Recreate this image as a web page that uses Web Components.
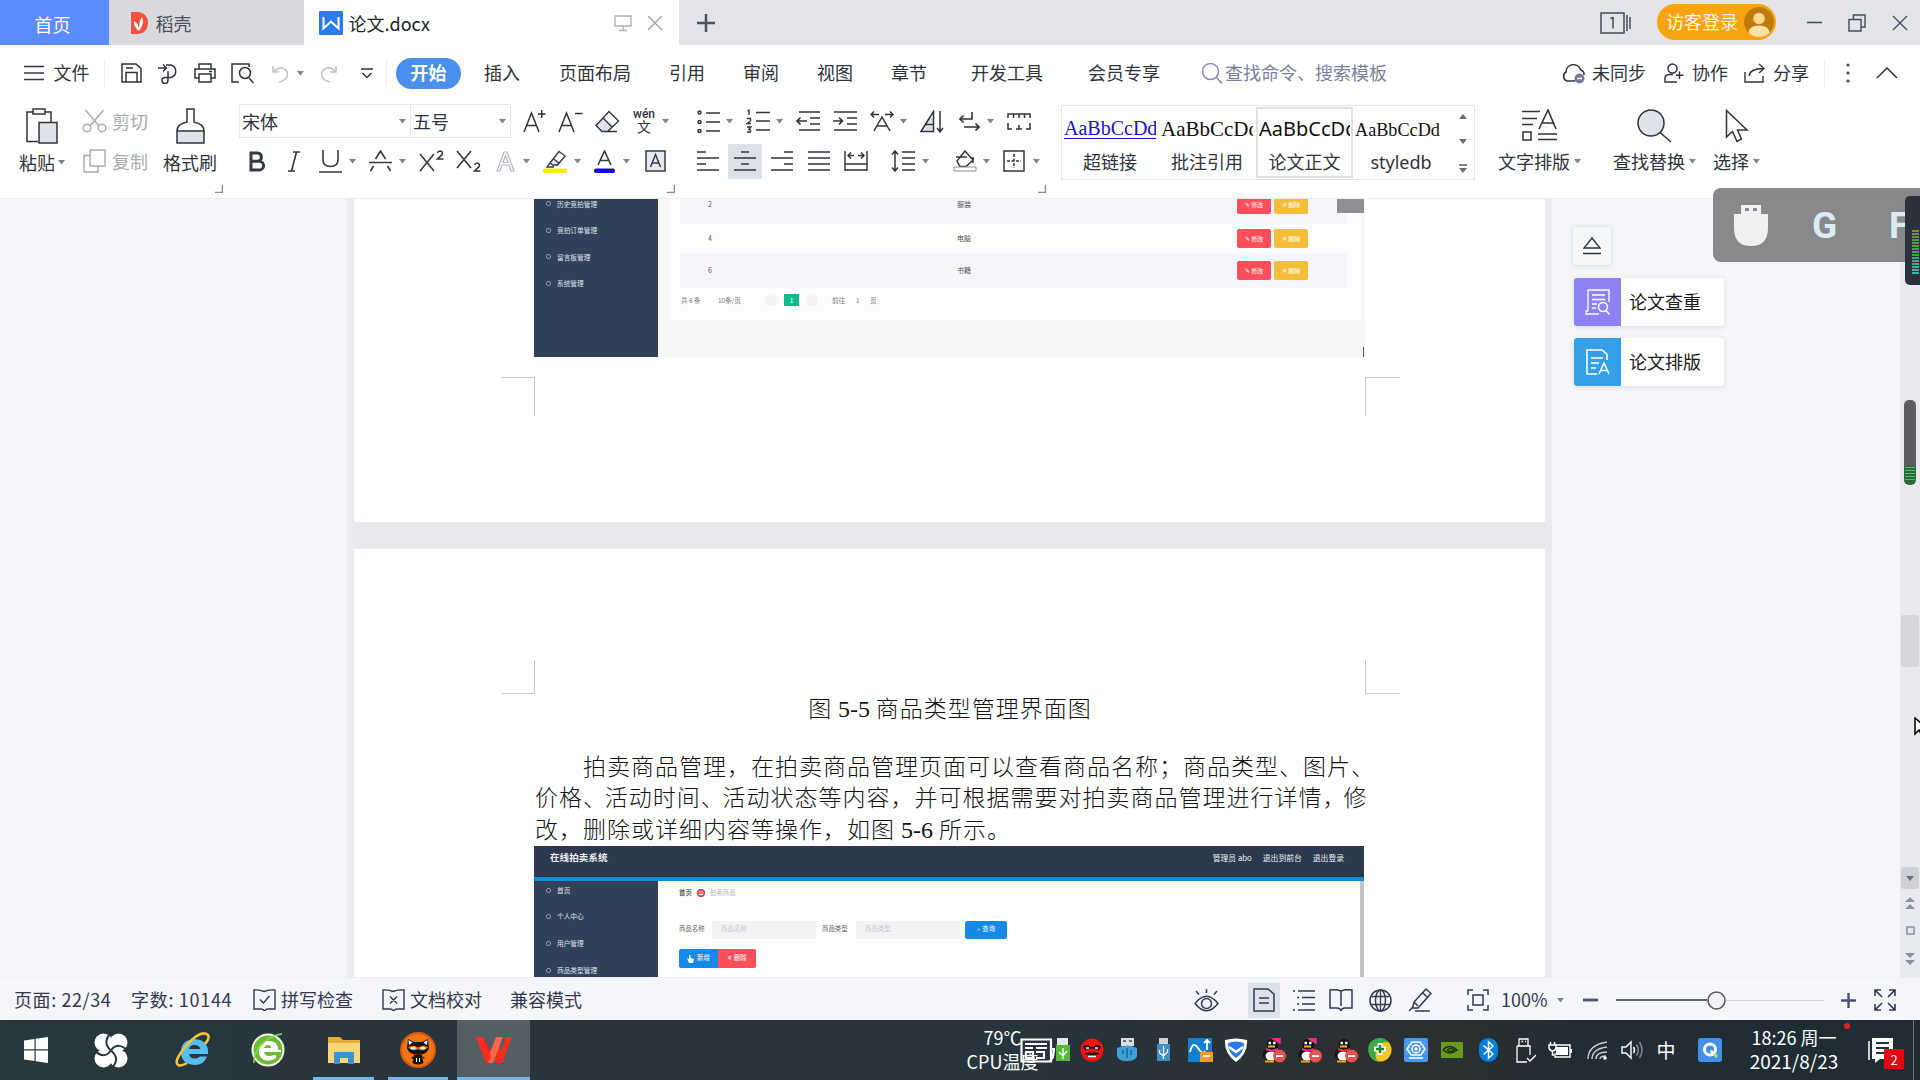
<!DOCTYPE html>
<html lang="zh-CN">
<head>
<meta charset="utf-8">
<title>论文.docx</title>
<style>
html,body{margin:0;height:100%;overflow:hidden;background:#f4f6f9}
body{font:18px/1 "Noto Sans CJK SC",sans-serif;color:#30343c}
</style>
</head>
<body>
<office-desktop></office-desktop>
<script>
/* ---------- icon set: [width, height, markup] ---------- */
const I = {
  daoke:[18,22,'<path d="M1 0H8Q18 1 18 11T8 22H1Z" fill="#f4523f" stroke="none"/><path d="M9 19Q3 14 4 9Q8 11 9 17Q9 9 12 5Q15 11 9 19" fill="#fff" stroke="none"/>'],
  writer:[24,24,'<rect width="24" height="24" rx="1" fill="#2b7af0" stroke="none"/><path d="M4.500 6V17.500L12 10.500L19.500 17.500V6" stroke="#fff" stroke-width="2"/>'],
  monitor:[18,18,'<path d="M1 2H17V12H1ZM9 12V16M5 16.500H13" stroke="#aab0ba" stroke-width="1.300"/>'],
  close:[16,16,'<path d="M1 1L15 15M15 1L1 15" stroke-width="1.300"/>'],
  plus:[18,18,'<path d="M9 0V18M0 9H18" stroke="#4b5062" stroke-width="2.500"/>'],
  winlist:[31,22,'<path d="M1 1H24V21H1ZM27 3V19M30 5V17M10.500 6.500L13 5.500V16.500" stroke-width="1.500"/>'],
  avatar:[30,30,'<circle cx="15" cy="15" r="15" fill="#bd7c0d" stroke="none"/><circle cx="15" cy="11.500" r="5.800" fill="#ffd68a" stroke="none"/><path d="M4.500 26Q5 18.500 15 18.500T25.500 26Q21 30 15 30T4.500 26" fill="#ffe0a6" stroke="none"/>'],
  min:[15,15,'<path d="M0 7.500H15" stroke-width="1.600"/>'],
  restore:[18,18,'<path d="M1 5.500H13V17H1ZM5.500 5V1H17V13H13.500" stroke-width="1.400"/>'],
  menu:[20,16,'<path d="M0 1.500H20M0 8H20M0 14.500H20" stroke-width="1.500"/>'],
  save:[21,20,'<path d="M1 1H15L20 5.500V19H1ZM5 19V9.500H16V19M5 5H12" stroke-width="1.500"/>'],
  export:[22,21,'<path d="M1 5H9M6 1.500L9.500 5L6 8.500M9 2H14A6.500 6.500 0 0 1 14 14.500H8M8 14.500A3 3 0 1 0 11 17.500V8" stroke-width="1.500"/>'],
  print:[22,20,'<path d="M5 6V1H17V6M5 15H1V6H21V15H17M5 11H17V19H5ZM15 8.500H18" stroke-width="1.500"/>'],
  preview:[23,21,'<path d="M8 19H1V1H18V4M18 15L22.500 20" stroke-width="1.500"/><circle cx="14" cy="10" r="5.500"/>'],
  undo:[17,19,'<path d="M1 2V8H7M1.500 8Q5 3 10 4Q16 6 15.500 11T7 18" stroke="#c3c5ca" stroke-width="1.600"/>'],
  redo:[17,19,'<path d="M16 2V8H10M15.500 8Q12 3 7 4Q1 6 1.500 11T10 18" stroke="#c3c5ca" stroke-width="1.600"/>'],
  more:[12,11,'<path d="M0 1H12M1.500 5L6 9.500L10.500 5" stroke-width="1.500"/>'],
  search:[22,22,'<circle cx="9.500" cy="9.500" r="8" stroke="#8a8fa3"/><path d="M15.500 15.500L21 21.500" stroke="#8a8fa3" stroke-width="1.600"/>'],
  cloud:[25,21,'<path d="M14 18H6A5 5 0 0 1 5 9A7.500 7.500 0 0 1 19.500 6.500Q23.500 8.500 23 12" stroke-width="1.500"/><circle cx="18.500" cy="15.500" r="5" fill="#737b92" stroke="none"/><path d="M16 15.500H21" stroke="#fff"/>'],
  person:[20,21,'<circle cx="8.500" cy="5.500" r="4.500"/><path d="M13 19H1V14Q2 11.500 5 11.500H9M15.500 8.500V16M11.800 12.200H19.500" stroke-width="1.400"/>'],
  share:[22,20,'<path d="M1 9V19H19V13M5 13Q6 5.500 19 5.500M15 1L20 5.500L15 10" stroke-width="1.400"/>'],
  dots:[4,20,'<g fill="#4b5062" stroke="none"><circle cx="2" cy="2" r="1.600"/><circle cx="2" cy="10" r="1.600"/><circle cx="2" cy="18" r="1.600"/></g>'],
  chevup:[22,12,'<path d="M1 11L11 1L21 11" stroke-width="1.500"/>'],
  caret:[7,5,'<path d="M0 0H7L3.500 4.500Z" fill="#7d828c" stroke="none"/>'],
  caretup:[8,5,'<path d="M0 5H8L4 0Z" fill="#6b7079" stroke="none"/>'],
  caretdn:[8,5,'<path d="M0 0H8L4 5Z" fill="#6b7079" stroke="none"/>'],
  caretmore:[8,9,'<path d="M0 1H8" stroke-width="1.200"/><path d="M0 4H8L4 9Z" fill="#6b7079" stroke="none"/>'],
  corner:[8,8,'<path d="M7.500 0V7.500H0" stroke="#858991"/>'],
  paste:[32,36,'<path d="M12 33.500H1V4H7M19 4H25V14" stroke-width="1.500"/><rect x="7" y="1" width="12" height="5" /><rect x="13" y="14.500" width="18" height="20.500" fill="#dfe2e8"/>'],
  cut:[25,24,'<g stroke="#a8abb2" stroke-width="1.400"><path d="M3.500 1L17 17M21.500 1L8 17"/><circle cx="5" cy="19" r="3.800"/><circle cx="20" cy="19" r="3.800"/></g>'],
  copy:[23,24,'<path d="M7 1H22V17H7ZM7 6.500H1V23H15V17" stroke="#a8abb2" stroke-width="1.400"/>'],
  brush:[29,36,'<path d="M1 23H28V35H1Z" fill="#dfe2e8" stroke="none"/><path d="M11 1H18V14Q28 16 28 23V35H1V23Q1 16 11 14ZM1 23H28" stroke-width="1.500"/>'],
  fontup:[23,23,'<path d="M1 22L8.500 3L16 22M4 15.500H13M15 4H22.500M18.700 0V8" stroke-width="1.500"/>'],
  fontdn:[25,23,'<path d="M1 22L8.500 3L16 22M4 15.500H13M17 3.500H24.500" stroke-width="1.500"/>'],
  eraser:[25,23,'<path d="M8 8L18 15L12.500 21H7L1 15Z" fill="#dfe2e8" stroke="none"/><path d="M14 1.500L23.500 11L12.500 21.500H7L1 15.500ZM8 8L17.500 17.500M11 21.500H22" stroke-width="1.400"/>'],
  bold:[17,21,'<path d="M2 2H9A4 4.200 0 0 1 9 10.300H2ZM2 10.300H10A4.500 4.300 0 0 1 10 19H2Z" stroke-width="3"/>'],
  italic:[12,21,'<path d="M5 1H12M0 20H7M8.500 1L3.500 20" stroke-width="1.600"/>'],
  underline:[23,23,'<path d="M4 0V10Q4 16.500 11.500 16.500T19 10V0M0 22H23" stroke-width="1.600"/>'],
  strike:[23,22,'<path d="M6.500 9L11.500 1L16.500 9M0 12.500H23M4.500 16L1.500 21M18.500 16L21.500 21" stroke-width="1.600"/>'],
  sup:[25,22,'<path d="M1 4L15 21M15 4L1 21" stroke-width="1.600"/><path d="M18.500 3Q19 1 21 1Q24 1.500 23.300 4Q22.500 5.500 18.500 9H24.500" stroke-width="1.600"/>'],
  sub:[25,22,'<path d="M1 1L15 18M15 1L1 18" stroke-width="1.600"/><path d="M18.500 15Q19 13 21 13Q24 13.500 23.300 16Q22.500 17.500 18.500 21H24.500" stroke-width="1.600"/>'],
  effect:[19,21,'<path d="M1 20L8 1H11L18 20H15L13 14H6L4 20ZM7 11.500H12L9.500 4.500Z" stroke="#b1b4bb" stroke-width="1.200"/>'],
  highlight:[24,23,'<path d="M10 9L17 14L14 16.500H8Z" fill="#dfe2e8" stroke="none"/><path d="M16 1.500L22 6L14.500 15H9.500L7 13ZM10 8.500L16 13M7 13L4 17H11" stroke-width="1.400"/><rect x="0" y="18.500" width="24" height="4.500" rx="2" fill="#f4f000" stroke="none"/>'],
  fontcolor:[21,23,'<path d="M4 15L10.500 1L17 15M6 10.500H15" stroke-width="1.600"/><rect y="18.500" width="21" height="4.500" rx="2" fill="#1406e0" stroke="none"/>'],
  charbox:[21,22,'<rect x="1" y="1" width="19" height="20" fill="#e7e9ee"/><path d="M5.500 17L10.500 4.500L15.500 17M7.500 13H13.500" stroke-width="1.500"/>'],
  bullets:[23,23,'<path d="M9 3H23M9 12H23M9 21H23" stroke-width="1.600"/><circle cx="2.500" cy="2.500" r="1.500"/><circle cx="2.500" cy="12" r="1.500"/><circle cx="2.500" cy="21" r="1.500"/>'],
  numbers:[24,24,'<path d="M10 3.500H24M10 12H24M10 21H24" stroke-width="1.600"/><path d="M1.500 2L3 1V6M1 9.500H4.500V12L1 14.500H5M1 18H5L3 20.300Q5 21 4.500 23H1" stroke-width="1.300"/>'],
  outdent:[24,20,'<path d="M3 1H24M14 7H24M14 13H24M3 19H24M11 10H1M4.500 6.500L1 10L4.500 13.500" stroke-width="1.600"/>'],
  indent:[24,20,'<path d="M1 1H24M14 7H24M14 13H24M1 19H24M0 10H9.500M6 6.500L9.500 10L6 13.500" stroke-width="1.600"/>'],
  asian:[24,21,'<path d="M4 20L12 6L20 20M7 15H17M9 3.500H1M4 0.500L1 3.500L4 6.500M15 3.500H23M20 0.500L23 3.500L20 6.500" stroke-width="1.500"/>'],
  sort:[24,23,'<path d="M8 8L14 8V21H4Z" fill="#dfe2e8" stroke="none"/><path d="M1 21.500L13.500 1.500V21.500ZM6 14.500H13.500M20 1V21.500M17 18L20 22L23 18" stroke-width="1.500"/>'],
  wrap:[21,20,'<path d="M13 1V8H1M4.500 4.500L1 8L4.500 11.500M5 16H20M16.500 12.500L20 16L16.500 19.500" stroke-width="1.600"/>'],
  ruler:[24,17,'<path d="M1 5V1H23V5M6.500 1V5M12 1V5M17.500 1V5M1 10V16H5M23 10V16H19M9 16H15M12 12V16" stroke-width="1.500"/>'],
  al:[22,20,'<path d="M0 1H9M0 7H22M0 13H9M0 19H22" stroke-width="1.600"/>'],
  ac:[22,20,'<path d="M7 1H15M0 7H22M7 13H15M0 19H22" stroke-width="1.600"/>'],
  ar:[22,20,'<path d="M13 1H22M0 7H22M13 13H22M0 19H22" stroke-width="1.600"/>'],
  aj:[22,20,'<path d="M0 1H22M0 7H22M0 13H22M0 19H22" stroke-width="1.600"/>'],
  ad:[24,21,'<path d="M1 0V20M23 0V20M1 13H23M1 19H23M4 4.500H10M7 1.500L4 4.500L7 7.500M14 4.500H20M17 1.500L20 4.500L17 7.500" stroke-width="1.400"/>'],
  spacing:[24,22,'<path d="M11 2H24M11 8H24M11 14H24M11 20H24M4 1V21M1 4.500L4 1L7 4.500M1 17.500L4 21L7 17.500" stroke-width="1.500"/>'],
  fill:[24,22,'<path d="M12 1L20 10L13 16.500H7L4 11ZM3 7H14M20 7V13" stroke-width="1.500"/><path d="M1 17H23V21H1Z" fill="#fff" stroke="#8a8e97" stroke-width="1"/>'],
  border:[22,22,'<rect x="1" y="1" width="20" height="20"/><path d="M4 11H18M11 4V18" stroke-dasharray="3 1.500" stroke-width="1.500"/>'],
  typeset:[35,33,'<path d="M0 2.500H18M0 9.500H15M0 15.500H11M16 30.500H35M16 25H35M17 20L26 1L34 20M20 14H31" stroke-width="1.600"/><rect x="1" y="23" width="8" height="8"/>'],
  find:[35,34,'<circle cx="14" cy="14" r="13" fill="#dfe2e8" stroke-width="1.500"/><path d="M23 23.500L34 33" stroke-width="1.600"/>'],
  select:[24,34,'<path d="M1.500 1.500V28L7.500 22.500L12 32.500L16.500 30L12.500 21H22Z" stroke-width="1.500"/>'],
  eject:[18,18,'<path d="M9 1L17 11H1ZM0 16.500H18" stroke-width="1.400"/>'],
  check:[25,27,'<g stroke="#fff"><path d="M3 22V1H24V13M3 22H1V25H14M7 6H20M7 10.500H20M7 15H12M7 19H11" stroke-width="1.300"/><circle cx="18" cy="18" r="4.500"/><path d="M21 21.500L24.500 25.500"/></g>'],
  layout:[25,27,'<g stroke="#fff" stroke-width="1.500"><path d="M12 25H2V1H17L22 5.500V11M6 9H18M6 14H14M6 19H11M14 25L19 14L24 25M16 21.500H22.500"/></g>'],
  usbmouse:[34,42,'<path d="M7 1H27V10H34V24Q34 42 17 42T0 24V10H7Z" fill="#eef0f2" stroke="none"/><path d="M11 4H15V7H11ZM19 4H23V7H19Z" fill="#8b8d90" stroke="none"/>'],
  spell:[23,22,'<path d="M11 2.500Q7 0.500 1 1V20H8Q10 20 11.500 22Q13 20 15 20H22V1Q15 0.500 11 2.500M7 10.500L10.500 14L16.500 7" stroke-width="1.400"/>'],
  proof:[23,22,'<path d="M11 2.500Q7 0.500 1 1V20H8Q10 20 11.500 22Q13 20 15 20H22V1Q15 0.500 11 2.500M8 7.500L15 14.500M15 7.500L8 14.500" stroke-width="1.400"/>'],
  eye:[25,23,'<path d="M1 14.500Q12.500 0 24 14.500Q12.500 29 1 14.500M12.500 0V4M2 2L5 5.500M23 2L20 5.500" stroke-width="1.500"/><circle cx="12.500" cy="14.500" r="5"/>'],
  pageview:[22,24,'<path d="M1 1H15L21 6V23H1ZM6 10H16M6 15H16" stroke-width="1.500"/>'],
  outline:[22,21,'<path d="M5 1H22M9 7.500H22M9 14H22M5 20H22M0 1H2M4 7.500H6M4 14H6M0 20H2" stroke-width="1.500"/>'],
  book:[24,22,'<path d="M12 2Q8 0 1 1V19H8Q11 19 12 21.500Q13 19 16 19H23V1Q16 0 12 2V17" stroke-width="1.500"/>'],
  globe:[23,23,'<circle cx="11.500" cy="11.500" r="10.500"/><ellipse cx="11.500" cy="11.500" rx="5" ry="10.500"/><path d="M2.500 7.500H20.500M2.500 15.500H20.500M11.500 1V22" stroke-width="1.300"/>'],
  pen:[24,24,'<path d="M18 1L23 5.500L10 20H4.500L6 14ZM6 14L10 18M15 5L19 9M1 23L4.500 19.500M7 23H22" stroke-width="1.500"/>'],
  fit:[22,22,'<path d="M1 6V1H6M16 1H21V6M21 16V21H16M6 21H1V16M6 6H16V16H6Z" stroke-width="1.500"/>'],
  zoomout:[15,4,'<path d="M0 2H15" stroke="#4d5265" stroke-width="2.800"/>'],
  zoomin:[15,15,'<path d="M0 7.500H15M7.500 0V15" stroke="#4a4f74" stroke-width="2.400"/>'],
  full:[22,22,'<path d="M1 7V1H7M1 1L8 8M15 1H21V7M21 1L14 8M1 15V21H7M1 21L8 14M21 15V21H15M21 21L14 14" stroke-width="1.600"/>'],
  handle:[19,19,'<circle cx="9.500" cy="9.500" r="8.500" fill="#f1f2f5" stroke="#555" stroke-width="1.500"/>'],
  win:[24,26,'<path d="M0 3.500L10.500 2V12.300H0ZM11.700 1.800L24 0V12.300H11.700ZM0 13.600H10.500V24L0 22.500ZM11.700 13.600H24V26L11.700 24.200Z" fill="#fff" stroke="none"/>'],
  pinwheel:[34,35,'<g fill="#fff" stroke="none"><circle cx="9.500" cy="9.500" r="9"/><circle cx="24.500" cy="9.500" r="9"/><circle cx="24.500" cy="25.500" r="9"/><circle cx="9.500" cy="25.500" r="9"/><rect x="9" y="9" width="16" height="17"/></g><path d="M16.500 0Q8 10 17 17.500Q27 26 17.500 35M0 17Q10 27 17 17.500Q24 8 34 18" stroke="#2b373f" stroke-width="2"/>'],
  ie:[36,36,'<path d="M33 22H14Q15 26.500 19.500 26.500Q23 26.500 25 24.500H32Q29 33 19.500 33Q6 32 6 20T19.500 7Q34 8 33 22M14 17H25.500Q24 13 19.500 13T14 17" fill="#55c0ee" stroke="none"/><path d="M3 33Q-2 29 12 13T33 3Q35 6 30 12M3 33Q6 34.500 12 31" stroke="#f4c53c" stroke-width="2.600"/>'],
  greene:[34,36,'<circle cx="17" cy="18" r="15.500" fill="#6dbb35" stroke="#eef8e8" stroke-width="2"/><path d="M30 20H13Q14 24 18 24L25 23V26Q19 30 13 28Q7 25 8 18Q9 9 18 9T27 17.500L30 18ZM13 16H20Q20 13 17 13T13 16" fill="#fff" stroke="none"/><path d="M3 31Q2 22 11 12Q20 3 31 2" stroke="#8bd84f" stroke-width="1.500"/>'],
  folder:[34,30,'<path d="M1 2H13L16 5H33V28H1Z" fill="#e5ad3c" stroke="none"/><path d="M1 8H33V28H1Z" fill="#fcd575" stroke="none"/><path d="M7 29V17H27V29H21V23H13V29Z" fill="#3b93d4" stroke="none"/>'],
  ninja:[36,36,'<circle cx="18" cy="18" r="17" fill="#f47416" stroke="#d8590d" stroke-width="2"/><path d="M8 7L14 10H22L28 7L29 16Q27 23 18 23Q9 23 7 16ZM14 23H22L23.500 31Q18 34 12.500 31ZM11 26L14 24V27ZM25 26L22 24V27Z" fill="#161616" stroke="none"/><path d="M8.500 8L12.500 10.500L9 13ZM27.500 8L23.500 10.500L27 13Z" fill="#fff" stroke="none"/><path d="M8 15.500Q13 12 18 15.500Q23 12 28 15.500Q23 20 18 17Q13 20 8 15.500" fill="#f47416" stroke="none"/><ellipse cx="13" cy="16" rx="2.700" ry="1.300" fill="#fff" stroke="none"/><ellipse cx="23" cy="16" rx="2.700" ry="1.300" fill="#fff" stroke="none"/><path d="M16.500 26V30M19.500 26V30" stroke="#fff" stroke-width="1"/>'],
  wps:[36,28,'<path d="M0 1H7V6H11L15 17V27H10Z" fill="#ff2c1c" stroke="none"/><path d="M5 6H11L15 17L13 21Z" fill="#c8281f" stroke="none"/><path d="M20 27L17 17L22 8L25 16L30 1H36L26 27Z" fill="#ff2c1c" stroke="none"/><path d="M10 27L20 1H27L17 27Z" fill="#f4694b" stroke="none"/><path d="M0 1H7L15 20L12 27H10Z" fill="#ff2c1c" stroke="none"/>'],
  board:[35,25,'<path d="M1.500 1.500H31V23.500H1.500ZM31 11H34L33 19L30 23M5 6H27M5 10H13M16 10H27M6 14H13V20H6ZM16 14H24V20H16" stroke="#fff" stroke-width="2.200"/>'],
  gusb:[14,24,'<path d="M1 0H12V7H1Z" fill="#e3e8e3" stroke="none"/><path d="M0 7H14V23H0Z" fill="#56b83a" stroke="none"/><path d="M7 10V21M3 14L7 18L11 13" stroke="#eaf8e4"/>'],
  devil:[24,24,'<circle cx="12" cy="12" r="11.500" fill="#ed1515" stroke="none"/><path d="M3 8Q7 6 11 9H13Q17 6 21 8L19 12Q12 9 5 12Z" fill="#170b0b" stroke="none"/><path d="M6 10H9M15 10H18" stroke="#fff"/><path d="M4 16Q8 13 12 15Q16 13 20 16Q12 18 4 16" fill="#170b0b" stroke="none"/><path d="M8 18.500H16" stroke="#fff"/>'],
  busb:[20,24,'<path d="M4 0H17V8H4Z" fill="#d9dde0" stroke="none"/><path d="M6 3H9M12 3H15" stroke="#68727a" stroke-width="2"/><path d="M0 10Q10 5 20 10V18Q19 23 10 23T0 18Z" fill="#3f9fd9" stroke="none"/><path d="M10 10V20M6 12V16M14 12V17" stroke="#1d659b"/>'],
  tusb:[15,24,'<path d="M3 0H12V6H3Z" fill="#ccd3d8" stroke="none"/><path d="M1 6H14V23H1Z" fill="#3e8fc7" stroke="none"/><path d="M7.500 8V21M3.500 12V15L7.500 18L11.500 14V11" stroke="#fff" stroke-width="1.300"/>'],
  net:[25,24,'<rect width="24" height="24" fill="#127fcc" stroke="none"/><path d="M2 14Q5 2 10 10T17 13M19 12V2M16 5L19 2L22 5" stroke="#fff" stroke-width="1.800"/><path d="M12 14H25V24H12Z" fill="#f39a2a" stroke="none"/><path d="M15 18H22" stroke="#fff"/>'],
  shield:[24,24,'<path d="M1 2Q12-1 23 2Q24 16 12 24Q0 16 1 2" fill="#fff" stroke="none"/><path d="M4 5Q12 2 20 5Q20 15 12 20Q4 15 4 5" fill="#2b78e8" stroke="none"/><path d="M5 9L12 14L19 9" stroke="#fff" stroke-width="2.500"/>'],
  qq:[24,25,'<path d="M3 20Q-1 20 2 13Q3 11 5 10Q4 1 10 1T16 10Q21 15 17 22H4Z" fill="#101010" stroke="none"/><ellipse cx="9" cy="18" rx="5.500" ry="4.500" fill="#fff" stroke="none"/><path d="M4 11Q10 14 16 11" stroke="#e93434" stroke-width="2"/><path d="M6 8.500H13" stroke="#f4b61d" stroke-width="2"/><path d="M6.500 5H9M11 5H13.500" stroke="#fff" stroke-width="2.500"/><path d="M3 23.500H12" stroke="#f0a21d" stroke-width="2"/><circle cx="17.500" cy="18" r="6.500" fill="#e9534d" stroke="none"/><path d="M14 18H21" stroke="#fff" stroke-width="2"/>'],
  qqp:[24,25,'<path d="M3 20Q-1 20 2 13Q3 11 5 10Q4 1 10 1T16 10Q21 15 17 22H4Z" fill="#101010" stroke="none"/><ellipse cx="9" cy="18" rx="5.500" ry="4.500" fill="#fff" stroke="none"/><path d="M4 11Q10 14 16 11" stroke="#ef2b94" stroke-width="2"/><path d="M6 8.500H13" stroke="#f4b61d" stroke-width="2"/><path d="M6.500 5H9M11 5H13.500" stroke="#fff" stroke-width="2.500"/><path d="M11 1L18 5V0Z" fill="#ef2b94" stroke="#ef2b94"/><path d="M3 23.500H12" stroke="#f0a21d" stroke-width="2"/><circle cx="17.500" cy="18" r="6.500" fill="#e9534d" stroke="none"/><path d="M14 18H21" stroke="#fff" stroke-width="2"/>'],
  safe:[24,24,'<circle cx="12" cy="12" r="11.500" fill="#f0c81f" stroke="none"/><path d="M0 12A11.500 11.500 0 0 1 20 4Q10 4 8 13T12 23Q1 22 0 12" fill="#36aa49" stroke="none"/><path d="M12 5V17M6 11H18" stroke="#fff" stroke-width="5"/><path d="M12 7V15M8 11H16" stroke="#238335" stroke-width="2.500"/>'],
  cam:[24,24,'<rect width="24" height="24" rx="2" fill="#4897f2" stroke="none"/><g stroke="#fff" stroke-width="1.500"><path d="M8 4H16L21 11L17 17H7L3 11Z"/><circle cx="12" cy="11" r="4"/><circle cx="12" cy="11" r="1"/><path d="M5 20H19"/></g>'],
  nvidia:[22,16,'<rect width="22" height="16" fill="#679b19" stroke="none"/><path d="M2 8Q8 1 16 8Q9 14 2 8M6 8Q10 5 13 8Q9 11 6 8" stroke="#1e3108" stroke-width="1.500"/>'],
  bt:[19,24,'<rect width="19" height="24" rx="9.500" fill="#087fdd" stroke="none"/><path d="M4.500 7.500L14 16L9.500 20V4L14 8L4.500 16.500" stroke="#fff" stroke-width="1.500"/>'],
  usb:[20,25,'<path d="M3 1H12V8H3ZM1 8H14V17M1 8V24H11M11 20L14 23L20 17" stroke="#fff" stroke-width="1.300"/><path d="M5.500 3.500H7M9 3.500H10" stroke="#fff"/>'],
  battery:[24,18,'<path d="M6 4H22V16H7V12" stroke="#fff" stroke-width="1.400"/><path d="M8 6H20V14H8ZM22 8H24V12H22Z" fill="#fff" stroke="none"/><path d="M1 4H8V7Q7 10 4.500 10T1 7ZM2.500 1V4M6.500 1V4M4.500 10V14H6" stroke="#fff" fill="#202d35"/>'],
  wifi:[21,19,'<g stroke="#cad0d3" stroke-width="1.400"><path d="M1 18Q1 4 20 1"/><path d="M5 18Q5 8 20 6"/><path d="M9 18Q9 11 20 11"/><path d="M13 18Q13 15 19 15"/></g><circle cx="18" cy="17" r="1.800" fill="#fff" stroke="none"/>'],
  speaker:[22,20,'<path d="M1 7H5L10 2V18L5 13H1Z" stroke="#fff" stroke-width="1.400"/><path d="M12.500 7Q14.500 10 12.500 13" stroke="#fff"/><path d="M15.500 4.500Q19 10 15.500 15.500M18.500 2Q23.500 10 18.500 18" stroke="#808b91"/>'],
  qbox:[24,24,'<rect width="24" height="24" rx="3" fill="#4190ee" stroke="none"/><circle cx="12" cy="11.500" r="5.500" stroke="#fff" stroke-width="3"/><path d="M12.500 12.500L16 16" stroke="#fff" stroke-width="2.500"/><path d="M16 16L19 19" stroke="#b6ec52" stroke-width="2.800"/>'],
  note:[26,26,'<path d="M4 1H25V22H12L7 26V22H4Z" fill="#fff" stroke="none"/><path d="M1 4V23" stroke="#fff" stroke-width="1.500"/><path d="M8 6H21M8 11H21M8 16H16" stroke="#24313a" stroke-width="2"/>'],
  up2:[10,12,'<path d="M0 5H10L5 0ZM0 12H10L5 7Z" fill="#8d909a" stroke="none"/>'],
  dn2:[10,12,'<path d="M0 0H10L5 5ZM0 7H10L5 12Z" fill="#8d909a" stroke="none"/>'],
  sq:[9,9,'<rect x="1" y="1" width="7" height="7" stroke="#8d909a"/>'],
  face:[8,8,'<circle cx="4" cy="4" r="3.500" fill="#e96a78" stroke="#d94155"/><path d="M2 3H3M5 3H6M2 5.500H6" stroke="#fff" stroke-width=".8"/>'],
  hand:[7,8,'<path d="M2 0V4L0 3L2 8H6L7 4L3.500 3V0Z" fill="#fff" stroke="none"/>'],
  pointer:[12,20,'<path d="M1 1V17L5 13L8 19L11 18L8 12H14Z" fill="#fff" stroke="#000" stroke-width="1.500"/>']
};

customElements.define('ui-icon', class extends HTMLElement {
  constructor(){ super(); this.attachShadow({mode:'open'}); }
  connectedCallback(){
    const [w,h,m] = I[this.getAttribute('name')];
    this.shadowRoot.innerHTML = `<style>:host{display:inline-flex;flex:none;width:${w}px;height:${h}px}svg{display:block}</style>
      <svg width="${w}" height="${h}" viewBox="0 0 ${w} ${h}" fill="none" stroke="currentColor" stroke-width="1.500">${m}</svg>`;
  }
});

const icon = n => `<ui-icon name="${n}"></ui-icon>`;
/* One horizontal strip: [start, width, content, class]; margins carry the gaps between items. */
const strip = (x0, items) => { let x = x0; return items.map(([s,w,c,k='']) => {
  const o = `<span class="i ${k}" style="margin-left:${+(s-x).toFixed(2)}px;width:${w}px">${c}</span>`; x = s + w; return o; }).join(''); };
/* icon centred at c; text starting at s */
const ic = (c,n,k) => [c - I[n][0]/2, I[n][0], icon(n), k];
const tx = (s,w,t,k) => [s, w, t, k];

const base = `*{box-sizing:border-box}:host{display:block;flex:none;box-sizing:border-box}.row{display:flex;align-items:center}
.i{display:inline-flex;flex:none;align-items:center;white-space:nowrap}.c{justify-content:center}`;
const define = (tag, css, html) => customElements.define(tag, class extends HTMLElement {
  constructor(){ super(); this.attachShadow({mode:'open'}).innerHTML = `<style>${base}${css}</style>${html}`; }
});

define('title-bar', `:host{height:45px;background:#e2e4e7}.row{height:45px}
.tab{display:flex;flex:none;height:45px;align-items:center;padding-bottom:1px}.home{width:109px;justify-content:center;background:#5b8bff;color:#fff;padding:2px 4px 0 0}
.dk{width:195px;background:#d9dadd;color:#4a4e58;padding-top:2px}.doc{width:375px;background:#fff;color:#22262c;padding-top:2px}.pill{height:36px;border-radius:18px;background:#f7a40e;color:#fff7e4;padding-left:9px;gap:6px;margin-top:-2px}.pill span{margin-top:-2px}.dim{color:#9aa0aa}.dark{color:#454a5c}.t{padding-bottom:1px}`,
`<div class="row"><div class="tab home">首页</div>
<div class="tab dk">${strip(109,[ic(139,'daoke'),tx(155.5,40,'稻壳','t')])}</div>
<div class="tab doc">${strip(304,[ic(331,'writer'),tx(348.5,84,'论文.docx','t'),ic(623,'monitor'),ic(655,'close','dim')])}</div>
${strip(679,[ic(705.5,'plus'),ic(1615.5,'winlist','dark'),[1657,119,`<span>访客登录</span>${icon('avatar')}`,'pill'],ic(1814.5,'min','dark'),ic(1857,'restore','dark'),ic(1900,'close','dark')])}</div>`);

define('menu-bar', `:host{height:56px;background:#fff}.row{height:56px}.t{padding-bottom:1.500px}
.on{height:31px;border-radius:16px;background:#4a8fee;color:#fff;font-weight:700;justify-content:center;padding-bottom:2px}.s{color:#7c8199}.v{height:28px;background:#eceef1}`,
`<div class="row">${strip(0,[ic(34,'menu'),tx(53.5,38,'文件','t'),[104,1,'','v'],ic(131,'save'),ic(168,'export'),ic(205,'print'),ic(242.5,'preview'),ic(280.5,'undo'),ic(300,'caret'),ic(328.5,'redo'),ic(366.5,'more'),[386,1,'','v'],
[396,65,'开始','on'],tx(484,37,'插入','t'),tx(559,73,'页面布局','t'),tx(669,37,'引用','t'),tx(743,37,'审阅','t'),tx(817,37,'视图','t'),tx(891,37,'章节','t'),tx(971,73,'开发工具','t'),tx(1088,73,'会员专享','t'),
ic(1211.5,'search'),tx(1225,164,'查找命令、搜索模板','t s'),ic(1573.5,'cloud'),tx(1592,55,'未同步','t'),ic(1674,'person'),tx(1692,37,'协作','t'),ic(1755,'share'),tx(1773,37,'分享','t'),[1824,1,'','v'],ic(1847.5,'dots'),ic(1887,'chevup')])}</div>`);

define('ribbon-clipboard', `:host{width:229px}.cols{display:flex;height:80px}.col{display:flex;flex-direction:column;align-items:center;gap:7px;padding-top:7px}
.lab{display:flex;align-items:center;gap:3px;white-space:nowrap;line-height:22px}.mid{padding:0;gap:0;align-items:flex-start}.mid .row{height:40px;color:#a8abb2}.k{padding:4px 0 0 215px;line-height:0}`,
`<div class="cols"><div class="col" style="margin-left:19px;width:46px">${icon('paste')}<div class="lab">粘贴${icon('caret')}</div></div>
<div class="col mid" style="margin-left:17px;width:79px"><div class="row">${strip(82,[ic(94.5,'cut'),tx(112,37,'剪切')])}</div><div class="row">${strip(82,[ic(94,'copy'),tx(112,37,'复制')])}</div></div>
<div class="col" style="width:58px">${icon('brush')}<div class="lab">格式刷</div></div></div><div class="k">${icon('corner')}</div>`);

define('ribbon-font', `:host{width:453px}.row{height:40px}.f{height:34px;border:1px solid #e4e6ea;justify-content:space-between;padding:0 4px 0 2px}.f+.f{border-left:0}
.wen{flex-direction:column;font-size:14px;line-height:13px;gap:1px}.wen b{font:500 12px/10px Roboto,sans-serif}.k{padding:4px 0 0 438px;line-height:0}.r{color:#363a43}`,
`<div class="row">${strip(229,[[239,172,`宋体${icon('caret')}`,'f'],[411,100,`五号${icon('caret')}`,'f'],ic(534.5,'fontup'),ic(570,'fontdn'),ic(607,'eraser'),[630,28,'<b>wén</b><span>文</span>','wen'],ic(665.5,'caret')])}</div>
<div class="row r">${strip(229,[ic(257.5,'bold'),ic(294,'italic'),ic(330.5,'underline'),ic(352.500,'caret'),ic(380,'strike'),ic(402,'caret'),ic(431,'sup'),ic(468,'sub'),ic(505,'effect'),ic(526,'caret'),ic(555,'highlight'),ic(577,'caret'),ic(604.5,'fontcolor'),ic(626.5,'caret'),ic(655,'charbox')])}</div><div class="k">${icon('corner')}</div>`);

define('ribbon-paragraph', `:host{width:371px}.row{height:40px}.act{height:35px;background:#dde1e9;justify-content:center}.k{padding:4px 0 0 356px;line-height:0}`,
`<div class="row">${strip(682,[ic(708.5,'bullets'),ic(729.5,'caret'),ic(758,'numbers'),ic(779.5,'caret'),ic(808,'outdent'),ic(845,'indent'),ic(882,'asian'),ic(903.5,'caret'),ic(932,'sort'),ic(969,'wrap'),ic(990.5,'caret'),ic(1019,'ruler')])}</div>
<div class="row">${strip(682,[ic(708,'al'),[728,34,icon('ac'),'act'],ic(782,'ar'),ic(819,'aj'),ic(856,'ad'),ic(903,'spacing'),ic(925.5,'caret'),ic(965,'fill'),ic(986.5,'caret'),ic(1014,'border'),ic(1036.5,'caret')])}</div><div class="k">${icon('corner')}</div>`);

define('style-cell', `:host{display:flex;flex-direction:column;align-items:center;height:71px;padding:9px 3px 0 2px;gap:7px}.p{width:100%;overflow:hidden;white-space:nowrap;line-height:25px;height:27px;color:#111}
.l{line-height:22px;white-space:nowrap}:host([on]){border:2px solid #dfe1e5;padding:7px 1px 0}`, `<div class="p"><slot name="sample"></slot></div><div class="l"><slot></slot></div>`);

define('style-gallery', `:host{width:414px;height:75px;margin:4px 0 0 8px;border:1px solid #e3e5e9}.row{height:73px}.s{font-family:"Liberation Serif",serif}
.ar{display:flex;flex-direction:column;gap:20px;align-items:center;padding-top:2px}`,
`<div class="row"><style-cell style="width:97px"><span slot="sample" class="s" style="display:block;height:23px;font-size:20px;color:#1c0fd0;border-bottom:1px solid #1c0fd0">AaBbCcDd</span>超链接</style-cell>
<style-cell style="width:97px"><span slot="sample" class="s" style="font-size:21px">AaBbCcDd</span>批注引用</style-cell>
<style-cell on style="width:97px"><span slot="sample" style="font:20px 'Noto Sans',sans-serif;line-height:25px">AaBbCcDd</span>论文正文</style-cell>
<style-cell style="width:97px"><span slot="sample" class="s" style="font-size:18.200px">AaBbCcDd</span><span style="font:18px/20px 'Noto Sans',sans-serif">styledb</span></style-cell>
<div class="ar" style="margin-left:9px">${icon('caretup')}${icon('caretdn')}${icon('caretmore')}</div></div>`);

define('ribbon-action', `:host{display:flex;flex-direction:column;align-items:center;padding-top:8px;gap:7px;height:80px}.l{display:flex;align-items:center;gap:4px;white-space:nowrap;line-height:22px}.b{height:34px;display:flex}`,
`<div class="b"><slot name="icon"></slot></div><div class="l"><slot></slot>${icon('caret')}</div>`);

define('ribbon-bar', `:host{height:98px;background:#fff;border-bottom:1px solid #eceef1;display:flex;align-items:flex-start}`,
`<ribbon-clipboard></ribbon-clipboard><ribbon-font></ribbon-font><ribbon-paragraph></ribbon-paragraph><style-gallery></style-gallery>
<ribbon-action style="margin-left:23px;width:83px"><ui-icon slot="icon" name="typeset"></ui-icon>文字排版</ribbon-action>
<ribbon-action style="margin-left:32px;width:83px"><ui-icon slot="icon" name="find"></ui-icon>查找替换</ribbon-action>
<ribbon-action style="margin-left:17px;width:47px"><ui-icon slot="icon" name="select"></ui-icon>选择</ribbon-action>`);

/* ---------- embedded figures ---------- */
const side = (items) => items.map(t=>`<div class="m"><u></u>${t}</div>`).join('');
const fig = `:host{width:830px;margin-left:180px}.side{flex:none;width:124px;background:#314159;color:#dfe4ec;font-size:6.700px}.m{height:26.670px;display:flex;align-items:center;padding-left:12px;gap:6px}
.m u{width:5px;height:5px;border:1px solid #8d99ab;border-radius:2px}.btn{display:inline-flex;flex:none;align-items:center;justify-content:center;height:19px;border-radius:2px;color:#fff;font-size:6px;gap:3px;width:34px;background:#fb4f5b;margin-left:252px}.y{background:#f5be38;margin-left:3px}`;
const acts = `<span class="btn">✎ 修改</span><span class="btn y">✕ 删除</span>`;
define('figure-types', fig+`:host{display:flex;height:158px}.side .m:first-child{height:18px;align-items:flex-start;padding-top:2px}.main{display:flex;flex:1;background:#f7f9f9}.w{background:#fdfdfe;height:121px;width:690px;margin-left:13px;padding:0 14px 0 9px}
.tr{display:flex;align-items:center;font-size:7px;color:#555}.tr .n{width:60px;text-align:center}.tr .g{width:40px;margin-left:204px;margin-right:1px;text-align:center}.lav{background:#f5f5fc}.pg{height:24px;font-size:6.500px;color:#777}
.top{height:25px;padding-bottom:14px}.gr{height:12px;background:#0fbd8c;color:#fff}.dot{height:11px;border-radius:6px;background:#f3f3f5}.tail{display:flex;flex-direction:column;width:27px;justify-content:space-between;align-items:flex-end;margin-left:-28px}.tail b{width:27px;height:14px;background:#8e9093}.tail i{width:1px;height:10px;background:#555}`,
`<div class="side">${side(['历史竞拍管理','竞拍订单管理','留言板管理','系统管理'])}</div><div class="main"><div class="w">
<div class="tr lav top"><span class="n">2</span><span class="g">服装</span>${acts}</div>
<div class="tr" style="height:29px"><span class="n">4</span><span class="g">电脑</span>${acts}</div>
<div class="tr lav" style="height:35px"><span class="n">6</span><span class="g">书籍</span>${acts}</div>
<div class="row pg">${strip(680,[tx(681,20,'共 6 条'),tx(718,22,'10条/页'),[765,12,'','dot'],[784,15,'1','gr c'],[806,12,'','dot'],tx(832,14,'前往'),tx(856,4,'1'),tx(870,8,'页')])}</div></div></div>
<div class="tail"><b></b><i></i></div>`);

define('figure-goods', fig+`:host{height:132px;overflow:hidden}.hd{display:flex;align-items:center;height:31px;background:#2c384d;color:#eef1f5;padding:0 20px 7px 16px;font-size:7.800px;gap:11px;white-space:nowrap}.hd b{font-size:9.600px;margin-right:auto}
.ln{height:4px;background:#178cdb}.bd{display:flex;height:97px;overflow:hidden}.side .m:first-child{height:23px;padding-bottom:3.600px}.main{flex:1;padding:6px 0 0 21px;border-right:4px solid #c0c2c5;background:#fefefe;font-size:6.400px;color:#666}.l{height:13px}.f{height:28px;margin-top:16px}
.in{height:18px;background:#f3f2f4;color:#c9c9cd;padding-left:9px}.bl{background:#1489e8;color:#fff;justify-content:center;gap:3px;height:18px;border-radius:2px}.rd{background:#fb4f5b;color:#fff;justify-content:center;height:19px;border-radius:0 2px 2px 0}.h{height:19px;border-radius:2px 0 0 2px}.g{color:#b4b4b4}`,
`<div class="hd"><b>在线拍卖系统</b><span>管理员 abo</span><span>退出到前台</span><span>退出登录</span></div><div class="ln"></div>
<div class="bd"><div class="side">${side(['首页','个人中心','用户管理','商品类型管理'])}</div><div class="main">
<div class="row l">${strip(679,[tx(679,13,'<b>首页</b>'),ic(701,'face'),tx(710,28,'拍卖商品','g')])}</div>
<div class="row f">${strip(679,[tx(679,26,'商品名称'),tx(712,104,'商品名称','in'),tx(822,27,'商品类型'),tx(856,104,'商品类型','in'),[965,42,'⌕ 查询','bl']])}</div>
<div class="row" style="height:24px;margin-top:3px">${strip(679,[[679,39,icon('hand')+' 新增','bl h'],[718,38,'✕ 删除','rd']])}</div></div></div>`);

define('crop-marks', `:host{display:flex;justify-content:space-between;height:39px;padding:0 145px 0 148px}:host([low]){height:34px}i{width:33px;border:0 solid #c6c8cb}
.a{border-width:1px 1px 0 0}.b{border-width:1px 0 0 1px}.c{border-width:0 1px 1px 0}.d{border-width:0 0 1px 1px}.b,.d{width:35px}:host([low]) .a,:host([low]) .b,:host(:not([low])) .c,:host(:not([low])) .d{display:none}`,
`<i class="a"></i><i class="c"></i><i class="b"></i><i class="d"></i>`);

define('doc-paper', `:host{width:1191px;background:#fff;box-shadow:0 0 0 7px #eaebef}`, `<slot></slot>`);

define('document-area', `:host{width:1191px;margin-left:354px;height:778px}.gap{height:27px;background:#e8e9ed;box-shadow:0 0 0 7px #eaebef}doc-paper{position:relative;clip-path:inset(0 -7px)}
.cap,.p{font:300 23px/31.500px "Liberation Serif","Noto Sans CJK SC",serif;color:#151515;letter-spacing:1px;white-space:nowrap}.cap{text-align:center;word-spacing:-1px;padding-left:1px}.p{padding-left:181px}.q{letter-spacing:-1.300px}.z{letter-spacing:-2px}.n{letter-spacing:0;font-size:24px;font-weight:400}.w{word-spacing:-.8px}`,
`<doc-paper style="height:323px"><figure-types></figure-types><crop-marks style="margin-top:20px"></crop-marks></doc-paper><div class="gap"></div>
<doc-paper style="height:428px;padding-top:111px"><crop-marks low></crop-marks>
<div class="cap">图 <span class="n">5-5</span> 商品类型管理界面图</div>
<div class="p" style="margin-top:26px;padding-left:229px">拍卖商品管理，在拍卖商品管理页面可以查看商品名称；商品类型、图片、</div>
<div class="p">价格<span class="q">、</span>活动时间<span class="q">、</span>活动状态等内容，并可根据需要对拍卖商品管理进行详情<span class="z">，</span>修</div>
<div class="p w">改，删除或详细内容等操作，如图 <span class="n">5-6</span> 所示。</div><figure-goods style="margin-top:-.5px"></figure-goods></doc-paper>`);

define('side-card', `:host{display:flex;width:150px;height:48px;background:#fff;border-radius:3px;box-shadow:0 1px 5px #d9dbe0;color:#1a1c20;overflow:hidden}.k{width:47px;display:flex;align-items:center;justify-content:center;background:var(--tint)}.t{padding:14px 0 0 8px}`,
`<div class="k"><slot name="icon"></slot></div><div class="t"><slot></slot></div>`);

define('side-panel', `:host{width:150px;margin-left:28px;padding-top:28px}.e{width:38px;height:38px;background:#f7f8f9;box-shadow:0 0 4px #d3d5d9;display:flex;align-items:center;justify-content:center}side-card{margin:12px 0 0 1px}`,
`<div class="e">${icon('eject')}</div><side-card style="--tint:#8b83f6;margin-top:13px"><ui-icon slot="icon" name="check"></ui-icon>论文查重</side-card><side-card style="--tint:#33a0e8"><ui-icon slot="icon" name="layout"></ui-icon>论文排版</side-card>`);

define('scroll-rail', `:host{width:20px;margin-left:auto;height:778px;background:#e9eaf0;display:flex;flex-direction:column;align-items:center}.m{width:12px;height:85px;border-radius:5px;background:linear-gradient(#5c5d61 0 66px,#286b38 66px);margin-top:201px;padding-top:67px}
.m i{display:block;height:1px;margin:0 1px 2px;background:#59b777}.t{width:18px;height:52px;background:#d5d7dc;margin-top:130px;border-radius:2px}.b{width:18px;height:22px;background:#cfd1d6;margin:200px 0 8px;border-radius:3px;display:flex;align-items:center;justify-content:center}`,
`<div class="m"><i></i><i></i><i></i><i></i><i></i></div><div class="t"></div><div class="b"><ui-icon name="caretdn"></ui-icon></div>${icon('up2')}<span style="height:17px"></span>${icon('sq')}<span style="height:18px"></span>${icon('dn2')}`);

/* floating keyboard-lock overlay and level meter */
define('lock-overlay', `:host{position:absolute;left:1713px;top:188px;width:207px;height:74px;border-radius:8px 0 0 8px;background:rgba(126,128,130,.93)}.row{height:74px;font:bold 37px Roboto,sans-serif;color:#dcecf4;overflow:hidden}
.lv{position:absolute;right:0;top:8px;width:15px;height:89px;border-radius:5px 0 0 5px;background:#2b313d;padding:33px 1px 0 7px}.lv div{height:46px;background:repeating-linear-gradient(#2b313d 0 1px,transparent 1px 3px),linear-gradient(#868b38,#489956,#43b9b5)}`,
`<div class="row">${strip(1713,[ic(1751,'usbmouse'),tx(1812,28,'G'),tx(1889,25,'F')])}</div><div class="lv"><div></div></div>`);
define('mouse-pointer', `:host{position:absolute;left:1914px;top:717px;width:6px;overflow:hidden}`, icon('pointer'));

define('status-bar', `:host{height:43px;background:#f4f6f9;border-top:1px solid #eceef2}.row{height:44px;color:#343850}.t{padding-bottom:2px}.act{height:35px;background:#dce1ea;justify-content:center}.tr{height:2px;background:#5f6268}.t2{height:1px;background:#cfd1d5}`,
`<div class="row">${strip(0,[tx(14,100,'<span style="letter-spacing:.6px">页面: 22/34</span>','t'),tx(131,104,'<span style="letter-spacing:.7px">字数: 10144</span>','t'),ic(264,'spell'),tx(281,73,'拼写检查','t'),ic(393,'proof'),tx(410,73,'文档校对','t'),tx(510,73,'兼容模式','t'),
ic(1206.5,'eye'),[1247.5,32,icon('pageview'),'act'],ic(1303.5,'outline'),ic(1341,'book'),ic(1380,'globe'),ic(1420,'pen'),ic(1478,'fit'),tx(1501,50,'100%','t'),ic(1560,'caret'),ic(1590,'zoomout'),[1616,91,'','tr'],[1707,19,icon('handle')],[1726,98,'','t2'],ic(1848,'zoomin'),ic(1885,'full')])}</div>`);

define('task-bar', `:host{height:60px;background:linear-gradient(90deg,#29373f 0,#28353d 25%,#27343b 55%,#2b2f31 72%,#29302f 76%,#202d35 82%,#1f2c34);color:#fff}.row{height:60px}
.app{height:60px;border-bottom:3px solid #76b5e8;justify-content:center;padding-top:3px}.on{background:#535e65}.two{flex-direction:column;line-height:24px;justify-content:center;padding-bottom:3px}.end{height:60px;border-left:1px solid #6f7b82}
.badge{background:#e3040f;height:20px;font-size:13px;justify-content:center;margin-top:18px}.dot{height:6px;border-radius:3px;background:#ed1c24;margin-bottom:48px}.lo{justify-content:center;font-size:19px;padding-bottom:2px}`,
`<div class="row">${strip(0,[ic(36,'win'),ic(111,'pinwheel'),ic(193,'ie'),ic(268,'greene'),[313,61,icon('folder'),'app'],[388,60,icon('ninja'),'app'],[457,73,icon('wps'),'app on'],
[965,75,'<span>79℃</span><span>CPU温度</span>','two'],ic(1037.500,'board'),[1056,9,icon('gusb')],ic(1092,'devil'),ic(1127,'busb'),ic(1163,'tusb'),ic(1200,'net'),ic(1236,'shield'),ic(1274,'qqp'),ic(1310,'qqp'),ic(1346,'qq'),ic(1380,'safe'),ic(1416,'cam'),ic(1452,'nvidia'),ic(1488,'bt'),ic(1526,'usb'),ic(1560,'battery'),ic(1597,'wifi'),ic(1632,'speaker'),[1656,20,'中','lo'],ic(1710,'qbox'),
[1746,96,'<span>18:26 周一</span><span style="font-size:19px">2021/8/23</span>','two'],[1844,6,'','dot'],ic(1881,'note'),[1884,20,'2','badge'],[1913,7,'','end']])}</div>`);

define('office-desktop', `:host{width:1920px;height:1080px;position:relative;overflow:hidden;display:flex;flex-direction:column;background:#f4f6f9}.work{display:flex;height:778px;overflow:hidden;flex:none}`,
`<title-bar></title-bar><menu-bar></menu-bar><ribbon-bar></ribbon-bar><div class="work"><document-area></document-area><side-panel></side-panel><scroll-rail></scroll-rail></div>
<status-bar></status-bar><task-bar></task-bar><lock-overlay></lock-overlay><mouse-pointer></mouse-pointer>`);
</script>
</body>
</html>
